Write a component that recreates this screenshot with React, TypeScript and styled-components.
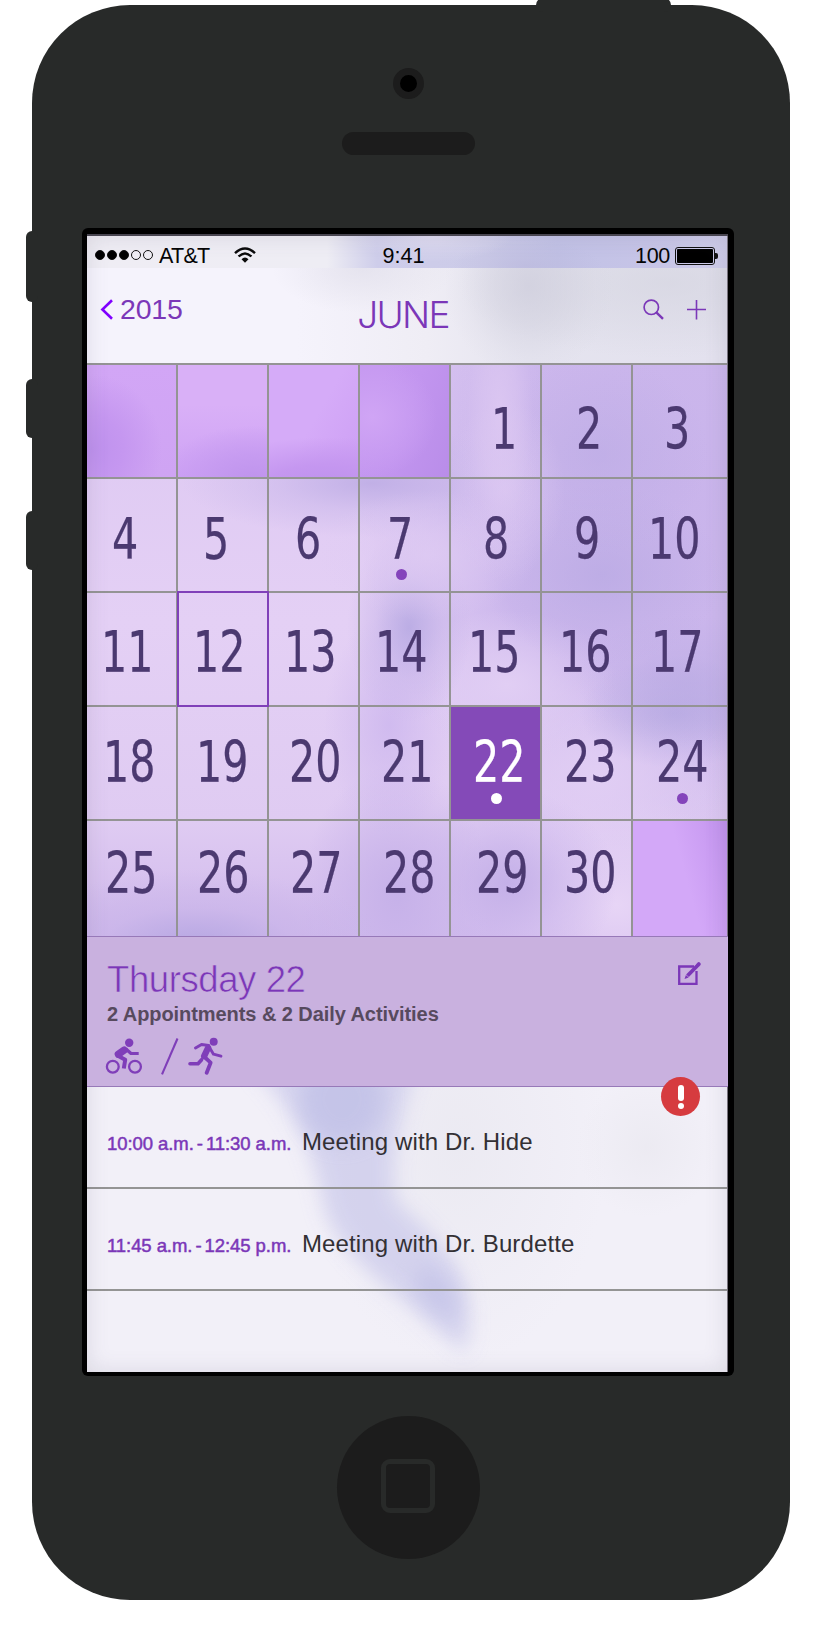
import React from "react";
import styled, { createGlobalStyle, css } from "styled-components";

const GlobalStyle = createGlobalStyle`
  * { box-sizing: border-box; }
  body { margin: 0; background: #fff; font-family: "Liberation Sans", Arial, sans-serif; }
`;

const PURPLE = "#7b37b8";
const LINE = "#949494";
const SHELL = "#282a29";
const RECESS = "#1c1c1c";

const Page = styled.div`
  width: 820px;
  height: 1627px;
  padding: 5px 0 0 32px;
  overflow: hidden;
`;

const Phone = styled.div`
  position: relative;
  width: 758px;
  height: 1595px;
  padding: 63px 5px 0 0;
  border-radius: 98px;
  background: ${SHELL};
  display: flex;
  flex-direction: column;
  align-items: center;
`;

const SideButton = styled.div<{ $top: number; $height: number }>`
  position: absolute;
  left: -6px;
  top: ${(p) => p.$top}px;
  width: 12px;
  height: ${(p) => p.$height}px;
  border-radius: 6px;
  background: ${SHELL};
`;

const PowerButton = styled.div`
  position: absolute;
  top: -7px;
  left: 504px;
  width: 135px;
  height: 14px;
  border-radius: 8px;
  background: ${SHELL};
`;

const Camera = styled.div`
  width: 31px;
  height: 31px;
  border: 7px solid ${RECESS};
  border-radius: 50%;
  background: #000;
`;

const Speaker = styled.div`
  width: 133px;
  height: 23px;
  margin-top: 33px;
  border-radius: 12px;
  background: ${RECESS};
`;

const Bezel = styled.div`
  width: 652px;
  height: 1148px;
  margin: 73px 1px 0 0;
  padding: 6px 6px 4px 5px;
  border-radius: 6px;
  background: #000;
`;

const Screen = styled.div`
  position: relative;
  height: 1138px;
  border-top: 2px solid #47444f;
  background: #f2f0f7;
  display: flex;
  flex-direction: column;
  overflow: hidden;
  &::after {
    content: "";
    position: absolute;
    inset: 0;
    box-shadow: inset 0 0 22px rgba(90, 80, 110, 0.15);
    border-right: 1px solid #77727d;
    pointer-events: none;
  }
`;

const StatusBar = styled.div`
  height: 32px;
  padding: 0 10px 0 8px;
  display: grid;
  grid-template-columns: 1fr auto 1fr;
  align-items: center;
  color: #050505;
  font-size: 21.5px;
  line-height: 32px;
  background:
    radial-gradient(ellipse 80px 26px at 345px 0, rgba(235, 230, 246, 0.6), transparent),
    radial-gradient(ellipse 75px 26px at 440px 30px, rgba(185, 183, 219, 0.6), transparent),
    linear-gradient(90deg, #efedf4 0, #eeedf4 240px, #cecdea 290px, #cccbe8 400px, #c2c2e6 470px, #c6c4e7 560px, #cfcde9);
`;

const Carrier = styled.div`
  display: flex;
  align-items: center;
`;

const CarrierName = styled.span`
  margin: 4px 0 0 6px;
  letter-spacing: -0.75px;
`;

const SignalDots = styled.div`
  display: flex;
  gap: 2px;
  margin-top: 2px;
`;

const SignalDot = styled.i<{ $on: boolean }>`
  width: 10px;
  height: 10px;
  border: 1px solid #111;
  border-radius: 50%;
  background: ${(p) => (p.$on ? "#000" : "transparent")};
`;

const WifiIcon = styled.svg`
  width: 22px;
  height: 16px;
  margin: 1px 0 0 25px;
`;

const Clock = styled.div`
  padding-top: 4px;
  margin-right: 6px;
`;

const Power = styled.div`
  display: flex;
  justify-content: flex-end;
  align-items: center;
  gap: 5px;
  letter-spacing: -0.3px;
  span { padding-top: 4px; }
`;

const Battery = styled.div`
  position: relative;
  width: 40px;
  height: 18px;
  margin: 3px 3px 0 0;
  padding: 1px;
  border: 1px solid #111;
  border-radius: 3px;
  &::before { content: ""; display: block; height: 100%; border-radius: 1px; background: #000; }
  &::after {
    content: "";
    position: absolute;
    right: -4px;
    top: 5px;
    width: 3px;
    height: 6px;
    border-radius: 0 2px 2px 0;
    background: #111;
  }
`;

const Header = styled.header`
  height: 97px;
  border-bottom: 2px solid ${LINE};
  padding: 0 21px 0 13px;
  display: grid;
  grid-template-columns: 1fr auto 1fr;
  color: ${PURPLE};
  background:
    radial-gradient(ellipse 85px 90px at 442px 18px, rgba(205, 204, 219, 0.7), rgba(208, 207, 221, 0.5) 40%, rgba(212, 211, 224, 0.15) 78%, transparent),
    radial-gradient(ellipse 210px 75px at 580px 15px, rgba(213, 213, 224, 0.7), rgba(213, 213, 224, 0.35) 55%, transparent),
    radial-gradient(ellipse 90px 45px at 275px 0, rgba(224, 222, 234, 0.7), transparent),
    linear-gradient(90deg, #f5f3fc 0, #f5f3fc 210px, #efedf5 340px, #e5e4ef 440px, #e3e1ee);
`;

const BackLink = styled.div`
  display: flex;
  align-items: flex-start;
  padding-top: 31px;
  gap: 7px;
  font-size: 28.5px;
  line-height: 21px;
  letter-spacing: -0.2px;
  svg { width: 13px; height: 21px; flex: none; }
`;

const MonthTitle = styled.h1`
  margin: 31px 1px 0 0;
  font: 350 37px/32px Inter, "Liberation Sans", sans-serif;
  letter-spacing: -1.7px;
`;

const Tools = styled.div`
  display: flex;
  justify-content: flex-end;
  padding-top: 31px;
  gap: 22px;
  svg { width: 21px; height: 21px; }
`;

const Calendar = styled.div`
  display: grid;
  grid-template-columns: 91px 91px 91px 91px 91px 91px 95px;
  grid-template-rows: 114px 114px 114px 114px 115px;
  background:
    radial-gradient(ellipse 42px 140px at 413px 50px, rgba(221, 200, 242, 0.9), rgba(221, 200, 242, 0.5) 45%, rgba(215, 194, 240, 0.12) 78%, transparent),
    radial-gradient(ellipse 60px 90px at 418px 125px, rgba(223, 203, 243, 0.7), transparent),
    radial-gradient(ellipse 110px 65px at 340px 190px, rgba(223, 203, 243, 0.8), transparent),
    radial-gradient(ellipse 110px 100px at 512px 90px, rgba(184, 169, 227, 0.5), transparent),
    radial-gradient(ellipse 120px 90px at 515px 210px, rgba(184, 169, 227, 0.7), transparent),
    radial-gradient(ellipse 110px 65px at 600px 315px, rgba(186, 171, 227, 0.6), transparent),
    radial-gradient(ellipse 95px 55px at 588px 348px, rgba(180, 168, 225, 0.75), transparent),
    radial-gradient(ellipse 190px 55px at 285px 118px, rgba(190, 173, 229, 0.9), rgba(200, 182, 234, 0.5) 50%, transparent),
    radial-gradient(ellipse 62px 95px at 322px 262px, rgba(184, 170, 227, 0.9), rgba(198, 180, 233, 0.45) 55%, transparent),
    radial-gradient(ellipse 65px 110px at 302px 360px, rgba(204, 182, 238, 0.8), transparent),
    radial-gradient(ellipse 190px 75px at 110px 580px, rgba(182, 167, 226, 1), rgba(200, 180, 233, 0.6) 50%, transparent),
    radial-gradient(ellipse 95px 130px at 310px 530px, rgba(198, 177, 233, 1), rgba(203, 182, 235, 0.6) 55%, transparent),
    radial-gradient(ellipse 110px 95px at 420px 518px, rgba(196, 176, 232, 1), rgba(205, 185, 237, 0.55) 55%, transparent),
    radial-gradient(ellipse 110px 75px at 420px 320px, rgba(225, 206, 244, 1), transparent),
    radial-gradient(ellipse 130px 110px at 510px 410px, rgba(225, 206, 244, 1), transparent),
    radial-gradient(ellipse 130px 110px at 530px 540px, rgba(231, 213, 246, 1), transparent),
    radial-gradient(ellipse 320px 360px at 590px 130px, rgba(201, 180, 235, 1), rgba(203, 182, 236, 0.95) 60%, transparent),
    linear-gradient(180deg, #ddc8f2, #e4d0f5 45%, #dfcbf2 80%, #d0b9ec);
`;

const emptyTones: Record<string, string> = {
  a: "radial-gradient(ellipse 70px 75px at 5px 84px, #be91ed, #c597f0 45%, transparent), linear-gradient(#d2a6f6, #cfa4f3)",
  b: "radial-gradient(ellipse 95px 55px at 75px 116px, #be93ec, #c59af0 40%, transparent), linear-gradient(#d9b0f7 35%, #cea2f5)",
  c: "radial-gradient(ellipse 140px 50px at 60px 122px, #be91ed, #c597f0 45%, transparent), linear-gradient(120deg, #d5abf8 50%, #cd9ff4)",
  d: "radial-gradient(ellipse 65px 60px at 12px 52px, #d0a5f5, rgba(205, 162, 244, 0.6) 50%, transparent), linear-gradient(110deg, #c598f0 20%, #c295ef 50%, #b98de9)",
  e: "linear-gradient(75deg, #d3a8f8 55%, #cb9ef3 78%, #c091ec)",
};

const Cell = styled.div<{ $tone?: string; $selected?: boolean; $outlined?: boolean; $lastCol?: boolean; $lastRow?: boolean }>`
  position: relative;
  border-right: ${(p) => (p.$lastCol ? "1px" : "2px")} solid ${LINE};
  border-bottom: ${(p) => (p.$lastRow ? "0" : "2px")} solid ${LINE};
  color: ${(p) => (p.$selected ? "#fff" : "#4b3970")};
  ${(p) => p.$tone && css`background: ${emptyTones[p.$tone]} padding-box;`}
  ${(p) => p.$selected && css`background: #844ab8 padding-box;`}
  ${(p) => p.$outlined && css`
    &::after {
      content: "";
      position: absolute;
      inset: -2px -2px -2px -1px;
      border: 2.5px solid #8040b9;
    }
  `}
`;

const DayNumber = styled.span<{ $left: number; $top: number }>`
  display: block;
  width: max-content;
  padding-top: ${(p) => p.$top}px;
  margin-left: ${(p) => p.$left}px;
  font: 400 56.5px/56px "DejaVu Sans", sans-serif;
  -webkit-text-stroke: 0.25px currentColor;
  transform: scaleX(0.73);
  transform-origin: left;
`;

const EventDot = styled.i<{ $left: number; $top: number }>`
  position: absolute;
  left: ${(p) => p.$left}px;
  top: ${(p) => p.$top}px;
  width: 11px;
  height: 11px;
  border-radius: 50%;
  background: #8444bb;
  ${Cell}[data-selected="true"] & { background: #fff; }
`;

const Summary = styled.section`
  position: relative;
  z-index: 1;
  height: 151px;
  padding: 24px 27px 0 20px;
  border-top: 1px solid #9779b8;
  border-bottom: 1px solid #9779b8;
  background: #c9b1df;
  display: flex;
  justify-content: space-between;
`;

const DayTitle = styled.h2`
  margin: 0;
  color: ${PURPLE};
  font-weight: 400;
  font-size: 36.5px;
  line-height: 37px;
  letter-spacing: -0.4px;
  -webkit-text-stroke: 0.6px #c9b1df;
  white-space: nowrap;
`;

const DaySubtitle = styled.p`
  margin: 4px 0 0;
  color: #574a5e;
  font-weight: 700;
  font-size: 20px;
  line-height: 24px;
  letter-spacing: -0.07px;
  white-space: nowrap;
`;

const Activities = styled.div`
  display: flex;
  margin: 11px 0 0 -2px;
  color: #7f3eb9;
  svg { height: 38px; }
`;

const EditIcon = styled.svg`
  width: 24px;
  height: 24px;
  margin-top: 1px;
`;

const Alert = styled.div`
  position: absolute;
  right: 28px;
  bottom: -30px;
  width: 39px;
  height: 39px;
  border-radius: 50%;
  background: #d63b3f;
  display: flex;
  flex-direction: column;
  align-items: center;
  gap: 2px;
  padding-top: 8px;
  &::before { content: ""; width: 6px; height: 16px; border-radius: 3px; background: #fff; }
  &::after { content: ""; width: 6px; height: 6px; border-radius: 50%; background: #fff; }
`;

const Agenda = styled.section`
  position: relative;
  flex: 1;
  background:
    radial-gradient(ellipse 70px 70px at 560px 60px, rgba(230, 229, 236, 0.5), transparent),
    radial-gradient(ellipse 150px 220px at 370px 60px, rgba(231, 230, 238, 0.6), transparent),
    #f2f0f8;
`;

const Streak = styled.svg`
  position: absolute;
  inset: 0;
  width: 641px;
  height: 285px;
`;

const AgendaRow = styled.div`
  position: relative;
  height: 102px;
  padding: 38px 0 0 20px;
  border-bottom: 2px solid ${LINE};
  display: flex;
  align-items: baseline;
  line-height: 34px;
  white-space: nowrap;
`;

const EventTime = styled.span`
  width: 195px;
  color: ${PURPLE};
  font-size: 18.5px;
  letter-spacing: -0.07px;
  -webkit-text-stroke: 0.5px currentColor;
`;

const Dash = styled.span`
  margin: 0 -2px;
`;

const EventTitle = styled.span`
  color: #333034;
  font-size: 24px;
  letter-spacing: 0.12px;
`;

const HomeButton = styled.div`
  width: 143px;
  height: 143px;
  margin-top: 40px;
  border-radius: 50%;
  background: ${RECESS};
  display: grid;
  place-items: center;
  padding: 0 2px 3px 0;
  &::before {
    content: "";
    width: 44px;
    height: 44px;
    border: 5px solid ${SHELL};
    border-radius: 9px;
  }
`;

type Day = { n?: number; left?: number; tone?: string; dot?: [number, number] };

const weeks: { top: number; days: Day[] }[] = [
  { top: 37, days: [{ tone: "a" }, { tone: "b" }, { tone: "c" }, { tone: "d" }, { n: 1, left: 39.5 }, { n: 2, left: 33.8 }, { n: 3, left: 31.3 }] },
  { top: 33, days: [{ n: 4, left: 24.5 }, { n: 5, left: 24.5 }, { n: 6, left: 25.7 }, { n: 7, left: 26.6, dot: [36, 90] }, { n: 8, left: 32 }, { n: 9, left: 31.5 }, { n: 10, left: 14.5 }] },
  { top: 32, days: [{ n: 11, left: 13.6 }, { n: 12, left: 14.8 }, { n: 13, left: 15 }, { n: 14, left: 15 }, { n: 15, left: 16.6 }, { n: 16, left: 17 }, { n: 17, left: 18 }] },
  { top: 28, days: [{ n: 18, left: 16.3 }, { n: 19, left: 17.8 }, { n: 20, left: 19.6 }, { n: 21, left: 20.7 }, { n: 22, left: 21.8, dot: [40, 86] }, { n: 23, left: 22.4 }, { n: 24, left: 22.6, dot: [44, 86] }] },
  { top: 25, days: [{ n: 25, left: 18 }, { n: 26, left: 19.4 }, { n: 27, left: 21.4 }, { n: 28, left: 23.4 }, { n: 29, left: 24.6 }, { n: 30, left: 22.3 }, { tone: "e" }] },
];

const today = 12;
const selected = 22;

const agenda = [
  { from: "10:00 a.m.", to: "11:30 a.m.", title: "Meeting with Dr. Hide" },
  { from: "11:45 a.m.", to: "12:45 p.m.", title: "Meeting with Dr. Burdette" },
];

export default function App() {
  return (
    <Page>
      <GlobalStyle />
      <Phone>
        <PowerButton />
        <SideButton $top={226} $height={71} />
        <SideButton $top={374} $height={59} />
        <SideButton $top={506} $height={59} />
        <Camera />
        <Speaker />
        <Bezel>
          <Screen>
            <StatusBar>
              <Carrier>
                <SignalDots>
                  {[true, true, true, false, false].map((on, i) => <SignalDot key={i} $on={on} />)}
                </SignalDots>
                <CarrierName>AT&amp;T</CarrierName>
                <WifiIcon viewBox="0 0 22 16" fill="none" stroke="#0a0a0a" strokeWidth="2.4">
                  <path d="M1 6.2Q11-3.2 21 6.2" />
                  <path d="M4.6 9.5Q11 3.3 17.4 9.5" />
                  <path d="M7.5 12.2Q11 8.8 14.5 12.2L11 15.8Z" fill="#0a0a0a" stroke="none" />
                </WifiIcon>
              </Carrier>
              <Clock>9:41</Clock>
              <Power>
                <span>100</span>
                <Battery />
              </Power>
            </StatusBar>
            <Header>
              <BackLink>
                <svg viewBox="0 0 13 21" fill="none" stroke="#8000ff" strokeWidth="2.6"><path d="M12 1.2 2.4 10.5 12 19.8" /></svg>
                2015
              </BackLink>
              <MonthTitle>JUNE</MonthTitle>
              <Tools>
                <svg viewBox="0 0 21 21" fill="none" stroke={PURPLE}>
                  <circle cx="8.3" cy="8.3" r="7.2" strokeWidth="1.7" />
                  <path d="m13.3 13.4 6.7 6.5" strokeWidth="2.4" />
                </svg>
                <svg viewBox="0 0 21 21" stroke={PURPLE} strokeWidth="1.6"><path d="M10.5 1v19.5M1 10.5h19" /></svg>
              </Tools>
            </Header>
            <Calendar>
              {weeks.map((week, r) =>
                week.days.map((d, c) => (
                  <Cell
                    key={`${r}-${c}`}
                    $tone={d.tone}
                    $selected={d.n === selected}
                    data-selected={d.n === selected}
                    $outlined={d.n === today}
                    $lastCol={c === 6}
                    $lastRow={r === 4}
                  >
                    {d.n && <DayNumber $left={d.left ?? 0} $top={week.top}>{d.n}</DayNumber>}
                    {d.dot && <EventDot $left={d.dot[0]} $top={d.dot[1]} />}
                  </Cell>
                ))
              )}
            </Calendar>
            <Summary>
              <div>
                <DayTitle>Thursday 22</DayTitle>
                <DaySubtitle>2 Appointments &amp; 2 Daily Activities</DaySubtitle>
                <Activities>
                  <svg width="120" viewBox="0 0 120 38" fill="none" stroke="currentColor" strokeLinejoin="round">
                    <circle cx="7.8" cy="29.7" r="5.9" strokeWidth="2.3" />
                    <circle cx="30" cy="29.7" r="5.9" strokeWidth="2.3" />
                    <circle cx="24.2" cy="5.7" r="4.2" fill="currentColor" stroke="none" />
                    <path d="m13.3 17.3 6-4.3" strokeWidth="7.2" strokeLinecap="round" />
                    <path d="m21 12 5 4.5h7.7" strokeWidth="3.2" />
                    <path d="m12.5 18.5 7.7 4.3-1.4 8.7" strokeWidth="4" />
                    <path d="M57 37.3 72.5 1.5" strokeWidth="2.1" />
                    <circle cx="108.7" cy="4.8" r="4" fill="currentColor" stroke="none" />
                    <path d="m90.5 11 6-3.5 7.3 1" strokeWidth="2.9" strokeLinecap="round" />
                    <path d="m103 11-3.8 8" strokeWidth="6.4" strokeLinecap="round" />
                    <path d="m104.5 10.5 4 6.7 7.5 2" strokeWidth="2.9" strokeLinecap="round" />
                    <path d="m99 19.5 6.600 6.200-3.900 10" strokeWidth="3.8" strokeLinecap="round" />
                    <path d="M85 26.7h8l3.600-4" strokeWidth="3.6" strokeLinecap="round" />
                  </svg>
                </Activities>
              </div>
              <EditIcon viewBox="0 0 24 24" fill="none" stroke={PURPLE}>
                <path d="M17 4.5H2.200v17.300h17.300V9" strokeWidth="2.3" />
                <path d="M10.5 13.8 19.8 4.2" strokeWidth="3.8" />
                <path d="m20.3 3.7 1.500-1.600" strokeWidth="3.8" strokeLinecap="round" />
                <path d="m7.5 17 1.400-4 2.800 2.600Z" fill={PURPLE} stroke="none" />
              </EditIcon>
              <Alert />
            </Summary>
            <Agenda>
              <Streak viewBox="0 0 641 285">
                <defs>
                  <filter id="soft" x="-50%" y="-30%" width="200%" height="160%"><feGaussianBlur stdDeviation="10" /></filter>
                </defs>
                <path d="M165-20C205 20 228 65 238 125Q253 165 310 208L378 266Q388 225 374 186Q352 150 310 115Q298 70 330-20Z" fill="#d2d0ed" opacity=".9" filter="url(#soft)" />
                <ellipse cx="255" cy="12" rx="42" ry="45" fill="#bdbde6" opacity=".65" filter="url(#soft)" />
                <ellipse cx="350" cy="206" rx="16" ry="30" transform="rotate(-35 350 206)" fill="#bdbde6" opacity=".5" filter="url(#soft)" />
              </Streak>
              {agenda.map((item) => (
                <AgendaRow key={item.title}>
                  <EventTime>{item.from} <Dash>-</Dash> {item.to}</EventTime>
                  <EventTitle>{item.title}</EventTitle>
                </AgendaRow>
              ))}
            </Agenda>
          </Screen>
        </Bezel>
        <HomeButton />
      </Phone>
    </Page>
  );
}
